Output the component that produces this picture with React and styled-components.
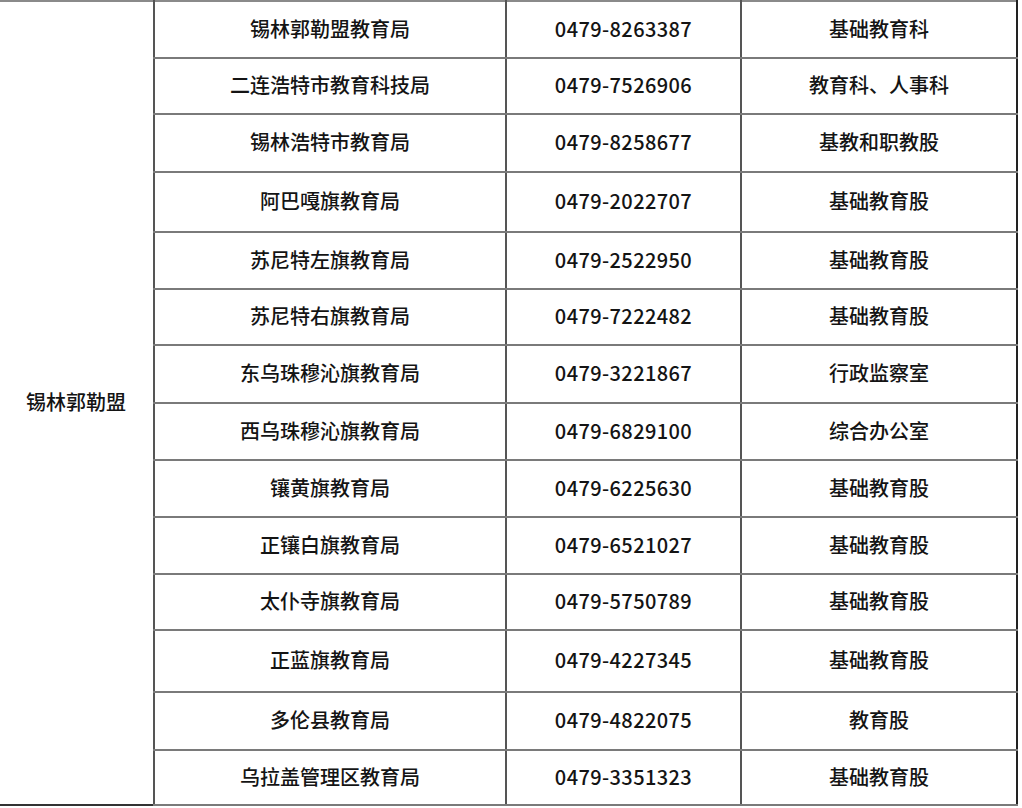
import React from 'react';
import styled, { createGlobalStyle } from 'styled-components';

const rows = [
  { name: '锡林郭勒盟教育局', phone: '0479-8263387', dept: '基础教育科', h: 57 },
  { name: '二连浩特市教育科技局', phone: '0479-7526906', dept: '教育科、人事科', h: 56 },
  { name: '锡林浩特市教育局', phone: '0479-8258677', dept: '基教和职教股', h: 58 },
  { name: '阿巴嘎旗教育局', phone: '0479-2022707', dept: '基础教育股', h: 60 },
  { name: '苏尼特左旗教育局', phone: '0479-2522950', dept: '基础教育股', h: 57 },
  { name: '苏尼特右旗教育局', phone: '0479-7222482', dept: '基础教育股', h: 56 },
  { name: '东乌珠穆沁旗教育局', phone: '0479-3221867', dept: '行政监察室', h: 58 },
  { name: '西乌珠穆沁旗教育局', phone: '0479-6829100', dept: '综合办公室', h: 57 },
  { name: '镶黄旗教育局', phone: '0479-6225630', dept: '基础教育股', h: 57 },
  { name: '正镶白旗教育局', phone: '0479-6521027', dept: '基础教育股', h: 57 },
  { name: '太仆寺旗教育局', phone: '0479-5750789', dept: '基础教育股', h: 56 },
  { name: '正蓝旗教育局', phone: '0479-4227345', dept: '基础教育股', h: 62 },
  { name: '多伦县教育局', phone: '0479-4822075', dept: '教育股', h: 58 },
  { name: '乌拉盖管理区教育局', phone: '0479-3351323', dept: '基础教育股', h: 55 },
];

const GlobalStyle = createGlobalStyle`
  html, body {
    margin: 0;
    padding: 0;
    background: #fff;
  }
  body {
    font-family: "Microsoft YaHei", "Noto Sans CJK SC", "Noto Sans", sans-serif;
    overflow: hidden;
  }
`;

const Page = styled.div`
  width: 1022px;
  height: 808px;
  background: #fff;
  overflow: hidden;
`;

const Table = styled.table`
  border-collapse: collapse;
  table-layout: fixed;
  width: 1018px;
  margin-left: -1px;
  border-top: 2px solid #8a8a8a;
  border-bottom: 2px solid #333;
  border-right: 2px solid #222;
`;

const Col = styled.col`
  width: ${({ $w }) => $w}px;
`;

const Row = styled.tr`
  height: ${({ $h }) => $h}px;
`;

const Cell = styled.td`
  padding: 0 0 2px;
  text-align: center;
  vertical-align: middle;
  font-size: 20px;
  font-weight: 500;
  line-height: 24px;
  color: #141414;
  border-left: 2px solid #555;
  border-bottom: 2px solid #7a7a7a;
  white-space: nowrap;
`;

const RegionCell = styled(Cell)`
  border-left: none;
  border-bottom: none;
  text-align: left;
  padding-left: 27px;
`;

const Phone = styled(Cell)`
  letter-spacing: 0.4px;
`;

export default function App() {
  return (
    <Page>
      <GlobalStyle />
      <Table>
        <colgroup>
          <Col $w={155} />
          <Col $w={352} />
          <Col $w={235} />
          <Col $w={276} />
        </colgroup>
        <tbody>
          {rows.map((r, i) => (
            <Row key={r.name} $h={r.h}>
              {i === 0 && <RegionCell rowSpan={rows.length}>锡林郭勒盟</RegionCell>}
              <Cell>{r.name}</Cell>
              <Phone>{r.phone}</Phone>
              <Cell>{r.dept}</Cell>
            </Row>
          ))}
        </tbody>
      </Table>
    </Page>
  );
}
